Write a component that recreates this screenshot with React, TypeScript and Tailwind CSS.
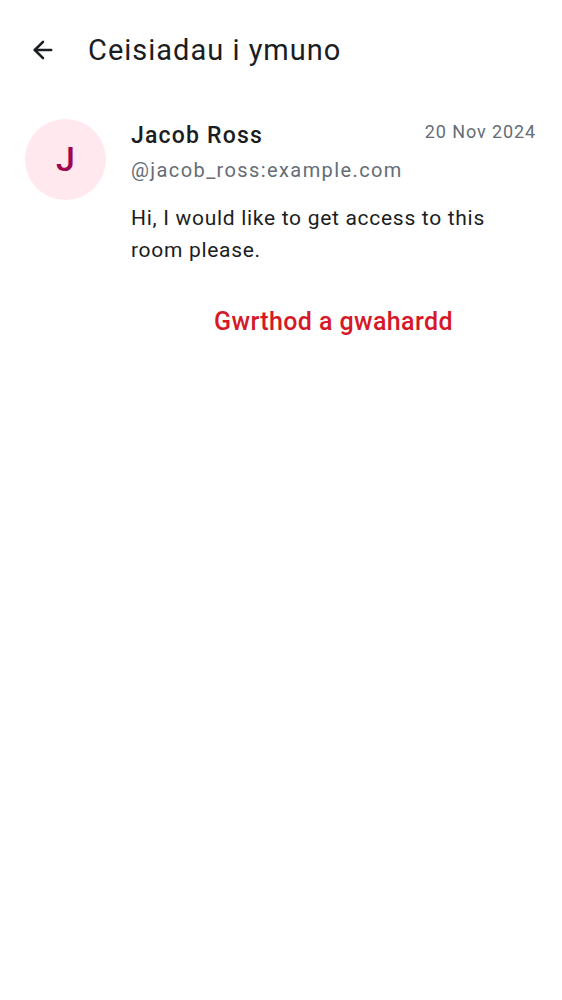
import { ArrowLeft } from "lucide-react";

export default function App() {
  return (
    <div className="min-h-[1000px] bg-white text-[#1b1d22]" style={{ fontFamily: "Roboto, sans-serif" }}>
      <header className="flex items-center h-[100px] px-[29px]">
        <ArrowLeft className="w-[28px] h-[28px] text-[#1b1d22]" strokeWidth={2.2} />
        <h1 className="ml-[31px] text-[29px] leading-none tracking-[1px]">Ceisiadau i ymuno</h1>
      </header>

      <div className="flex pl-[25px] pr-[26px] pt-[19px]">
        <div className="w-[81px] h-[81px] rounded-full bg-[#ffe9ee] flex items-center justify-center shrink-0">
          <span className="text-[34px] font-medium text-[#a1054f]">J</span>
        </div>
        <div className="ml-[25px] flex-1">
          <div className="flex justify-between items-start">
            <div className="text-[23px] font-medium leading-[34px] tracking-[1.2px]">Jacob Ross</div>
            <div className="text-[18px] text-[#656d77] leading-[26px] tracking-[0.9px]">20 Nov 2024</div>
          </div>
          <div className="text-[20px] text-[#656d77] leading-[34px] tracking-[1.4px]">@jacob_ross:example.com</div>
          <p className="mt-[15px] max-w-[380px] text-[21px] leading-[32px] tracking-[0.7px]">
            Hi, I would like to get access to this room please.
          </p>
          <div className="mt-[40px] flex justify-center">
            <button className="text-[25px] font-medium text-[#d51928] leading-[32px] tracking-[0.4px]">Gwrthod a gwahardd</button>
          </div>
        </div>
      </div>
    </div>
  );
}
